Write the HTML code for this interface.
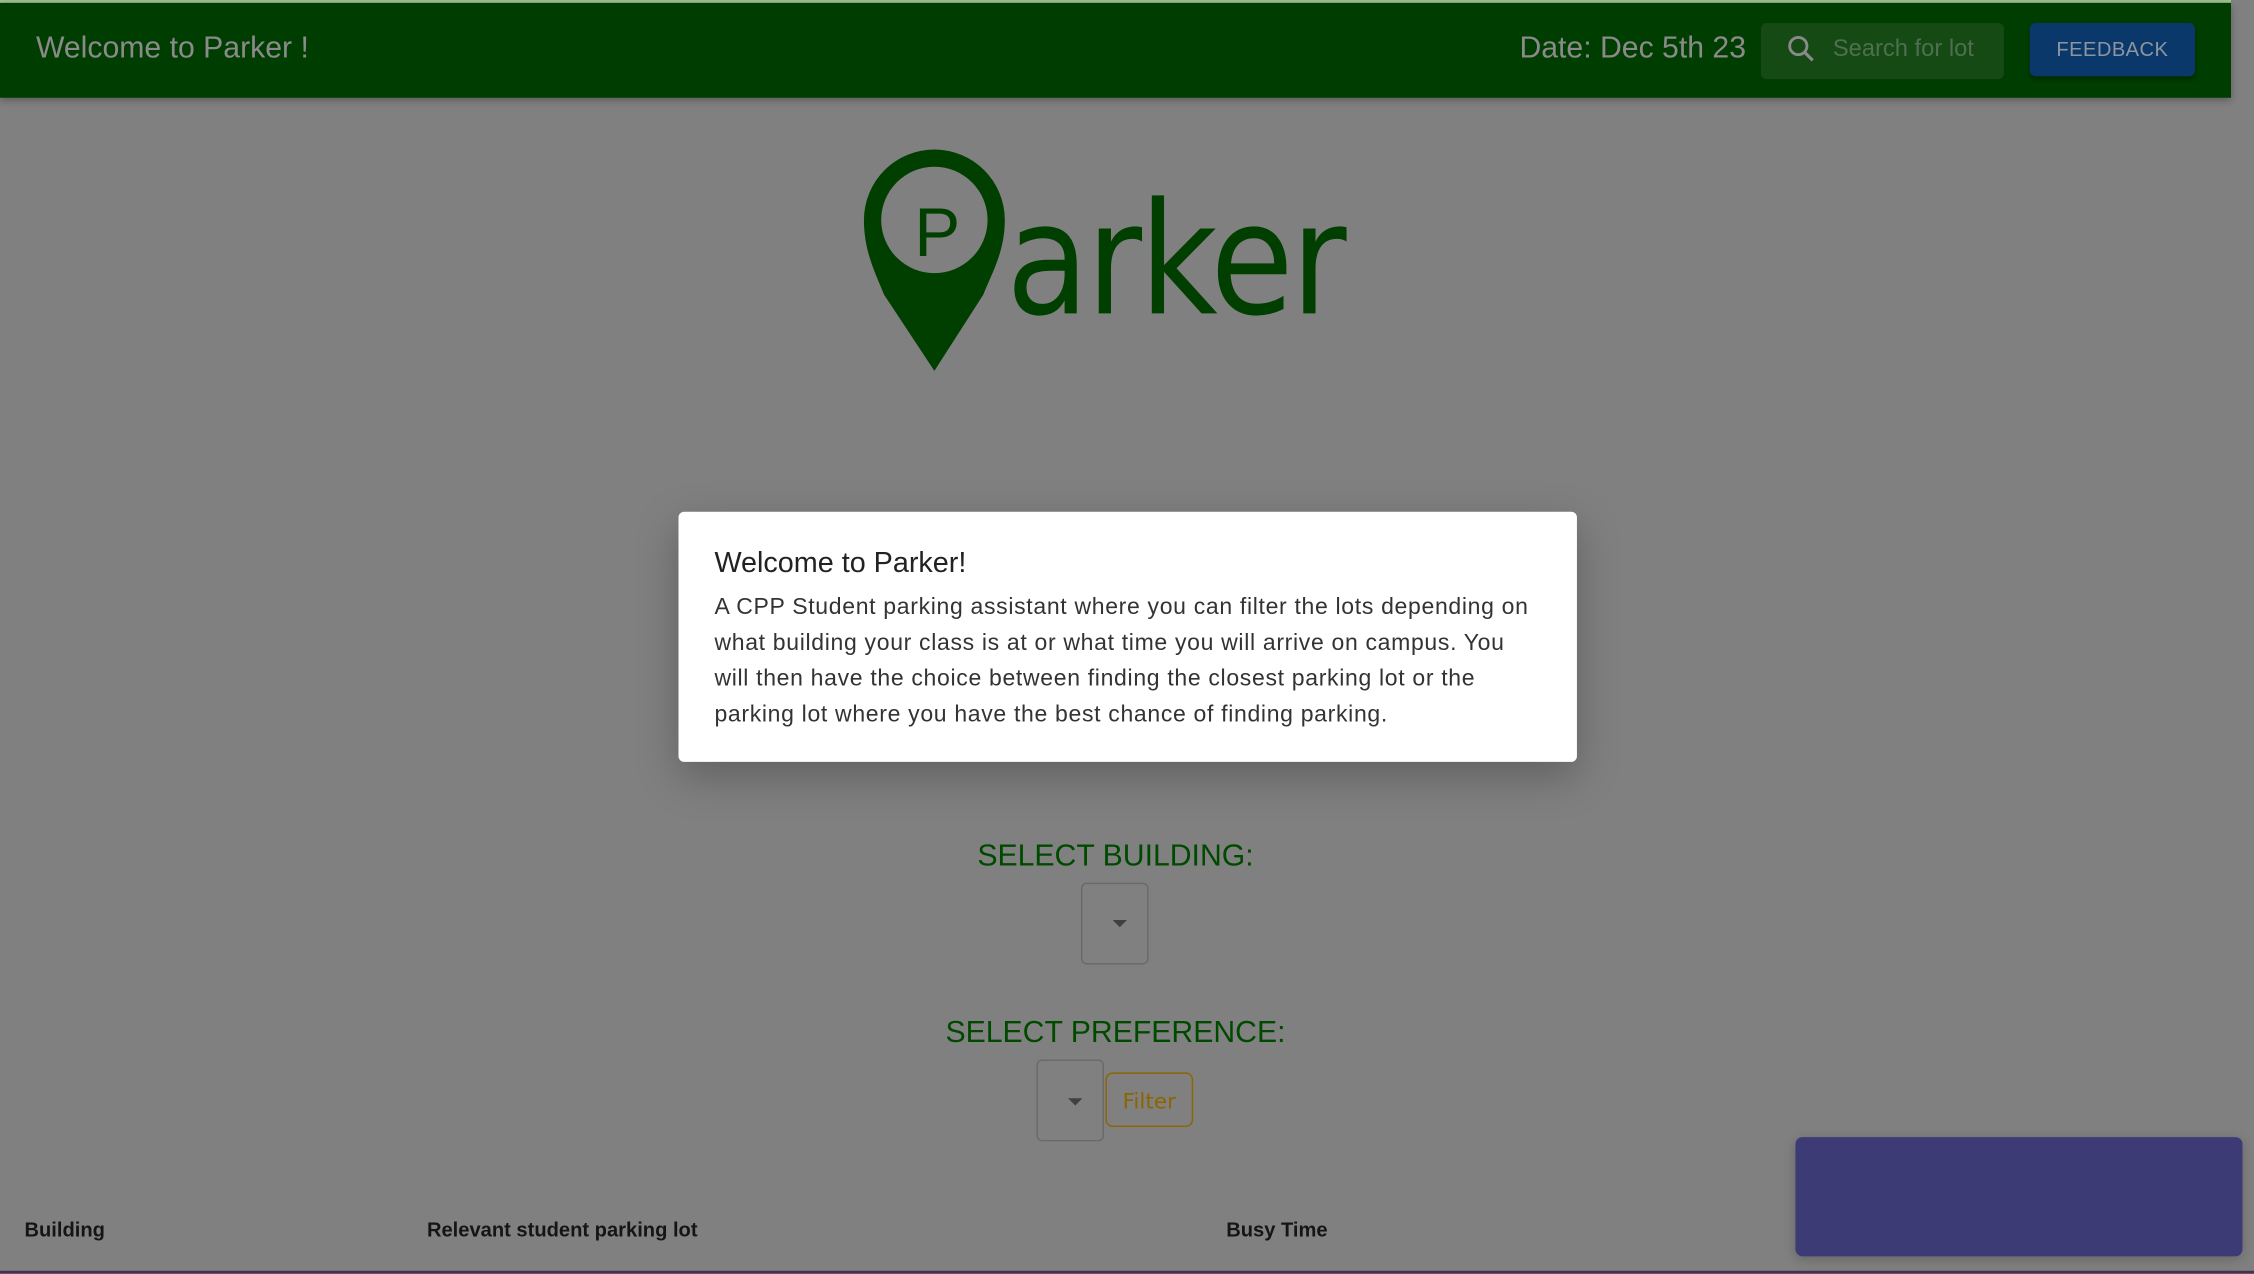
<!DOCTYPE html>
<html><head><meta charset="utf-8">
<style>
html,body{margin:0;padding:0;width:2254px;height:1273px;overflow:hidden;background:#808080;}
#w{position:absolute;left:0;top:0;width:1568px;height:886px;transform:scale(1.4375);transform-origin:0 0;background:#808080;font-family:"Liberation Sans",Arial,sans-serif;overflow:hidden;}
.a{position:absolute;}
</style></head><body>
<div id="w">
  <div class="a" style="left:0;top:0;width:1552px;height:2px;background:#9fbf90"></div>
  <div class="a" style="left:0;top:2px;width:1552px;height:66px;background:#003d00;box-shadow:0 2px 5px rgba(0,0,0,.3)"></div>
  <div class="a" style="left:25px;top:22px;font-size:21px;color:#8a8a8a;white-space:nowrap">Welcome to Parker !</div>
  <div class="a" style="left:1057px;top:22px;font-size:21px;color:#8a8a8a;white-space:nowrap">Date: Dec 5th 23</div>
  <div class="a" style="left:1225px;top:16px;width:169px;height:39px;background:#154a15;border-radius:4px"></div>
  <svg class="a" style="left:1241px;top:22px" width="24" height="24" viewBox="0 0 24 24"><circle cx="10" cy="10" r="6" fill="none" stroke="#8a8a8a" stroke-width="2"/><line x1="14.5" y1="14.5" x2="20" y2="20" stroke="#8a8a8a" stroke-width="2.2"/></svg>
  <div class="a" style="left:1275px;top:25px;font-size:16.5px;color:#4f6f4f;white-space:nowrap">Search for lot</div>
  <div class="a" style="left:1412px;top:16px;width:115px;height:37px;background:#0b386a;border-radius:4px;box-shadow:0 2px 3px rgba(0,0,0,.3);color:#8c95a0;font-size:14px;text-align:center;line-height:37px;letter-spacing:.3px">FEEDBACK</div>

  <svg class="a" style="left:0;top:0" width="1568" height="300">
    <path d="M650 104 A49 49 0 0 1 699 153 C699 175 690 190 684 205 L650 258 L615 205 C609 190 601 175 601 153 A49 49 0 0 1 650 104 Z" fill="#003f00"/>
    <circle cx="650" cy="153" r="37" fill="#808080"/>
    <text x="636" y="178" font-family="Liberation Sans,sans-serif" font-size="48" fill="#003f00">P</text>
  </svg>
  <div class="a" style="left:700px;top:128px;font-size:108px;line-height:108px;color:#003f00;white-space:nowrap;transform:scaleX(0.87);transform-origin:0 0;font-family:'DejaVu Sans',sans-serif;letter-spacing:-2px">arker</div>

  <div class="a" style="left:472px;top:356px;width:625px;height:174px;background:#fff;border-radius:4px;box-shadow:0 10px 30px rgba(0,0,0,.25)"></div>
  <div class="a" style="left:497px;top:381px;font-size:20px;color:#222;white-space:nowrap">Welcome to Parker!</div>
  <div class="a" style="left:497px;top:410px;width:570px;font-size:16px;line-height:25px;color:#333;letter-spacing:.47px">A CPP Student parking assistant where you can filter the lots depending on what building your class is at or what time you will arrive on campus. You will then have the choice between finding the closest parking lot or the parking lot where you have the best chance of finding parking.</div>

  <div class="a" style="left:576px;top:584px;width:400px;text-align:center;font-size:21px;color:#004a00">SELECT BUILDING:</div>
  <div class="a" style="left:752px;top:614px;width:47px;height:57px;border:1px solid #6a6a6a;border-radius:4px;box-sizing:border-box"></div>
  <div class="a" style="left:774px;top:640px;width:0;height:0;border-left:5px solid transparent;border-right:5px solid transparent;border-top:5px solid #404040"></div>

  <div class="a" style="left:576px;top:707px;width:400px;text-align:center;font-size:21px;color:#004a00">SELECT PREFERENCE:</div>
  <div class="a" style="left:721px;top:737px;width:47px;height:57px;border:1px solid #6a6a6a;border-radius:4px;box-sizing:border-box"></div>
  <div class="a" style="left:743px;top:764px;width:0;height:0;border-left:5px solid transparent;border-right:5px solid transparent;border-top:5px solid #404040"></div>
  <div class="a" style="left:769px;top:746px;width:61px;height:38px;border:1px solid #8a6500;border-radius:5px;box-sizing:border-box;color:#8a6500;font-size:15px;text-align:center;line-height:38px;font-family:'DejaVu Sans',sans-serif">Filter</div>

  <div class="a" style="left:17px;top:847px;font-size:14px;font-weight:bold;color:#151515">Building</div>
  <div class="a" style="left:297px;top:847px;font-size:14px;font-weight:bold;color:#151515">Relevant student parking lot</div>
  <div class="a" style="left:853px;top:847px;font-size:14px;font-weight:bold;color:#151515">Busy Time</div>

  <div class="a" style="left:1249px;top:791px;width:311px;height:83px;background:#3d3b76;border-radius:5px;box-shadow:0 2px 8px rgba(0,0,0,.2)"></div>
  <div class="a" style="left:0;top:884px;width:1568px;height:2px;background:#4a3050"></div>
</div>
</body></html>
